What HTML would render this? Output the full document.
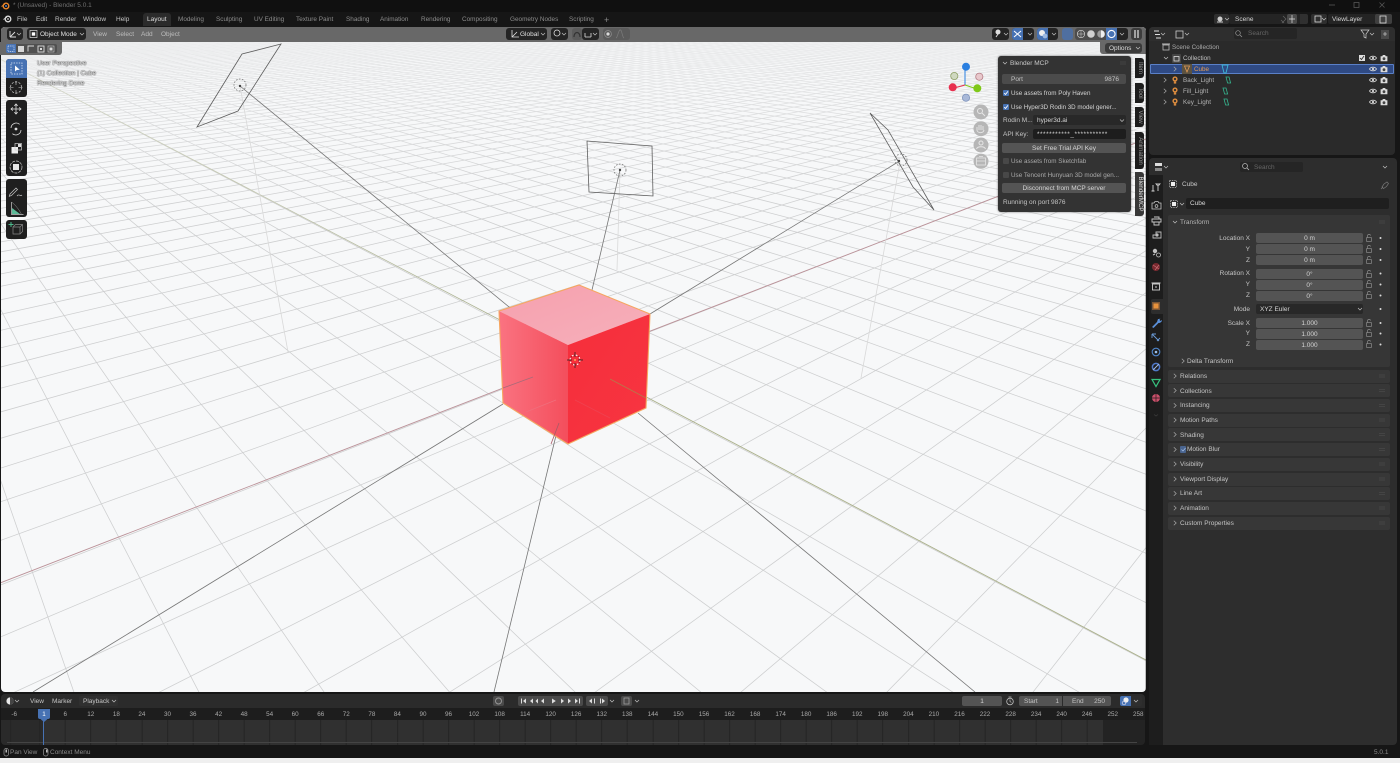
<!DOCTYPE html>
<html><head><meta charset="utf-8"><title>Blender</title>
<style>
html,body{margin:0;padding:0;width:1400px;height:763px;overflow:hidden;background:#efefef}
#app{position:absolute;left:0;top:0;width:1400px;height:758px;background:#161616;overflow:hidden;font-family:"Liberation Sans",sans-serif;filter:blur(.25px)}
.b{position:absolute;box-sizing:border-box}
.t{position:absolute;white-space:nowrap;font:6.5px/8px "Liberation Sans",sans-serif;height:8px;color:#c4c4c4;margin-top:1px}
.r{text-align:right}.c{text-align:center}
.f{position:absolute;background:#545454;border-radius:2px;height:10px;color:#d5d5d5;font:6.5px/11px "Liberation Sans",sans-serif;text-align:center}
.d{position:absolute;background:#282828;border-radius:2px;height:10px;color:#d5d5d5;font:6.5px/11px "Liberation Sans",sans-serif;box-sizing:border-box;padding-left:4px}
.p{position:absolute;left:1168px;width:222px;height:13px;background:#373737;border-radius:2px}
.h{position:absolute;background:#242424;border-radius:3px;height:12px;top:28px}
.tab{position:absolute;left:1135px;width:9px;background:#1d1d1d;border-radius:0 3px 3px 0}
.tab span{position:absolute;left:50%;top:50%;transform:translate(-50%,-50%) rotate(90deg);font:6.2px/8px "Liberation Sans",sans-serif;color:#9a9a9a;white-space:nowrap}
.n{position:absolute;top:711px;width:30px;margin-left:-15px;text-align:center;font:6.3px/8px "Liberation Sans",sans-serif;color:#a9a9a9}
.ov{position:absolute;font:6.5px/8px "Liberation Sans",sans-serif;color:#e6e6e6;text-shadow:0 0 1px #333,0 0 1px #333;white-space:nowrap;left:37px;margin-top:1px}
.w{color:#8b8b8b;font-size:6.4px}
svg{position:absolute;left:0;top:0}
</style></head><body><div id="app">

<!-- title & top bars -->
<div class="b" style="left:0;top:0;width:1400px;height:12px;background:#101010"></div>
<div class="t" style="left:13px;top:1px;color:#707070">* (Unsaved) - Blender 5.0.1</div>
<div class="t" style="left:17px;top:15px">File</div>
<div class="t" style="left:36px;top:15px">Edit</div>
<div class="t" style="left:55px;top:15px">Render</div>
<div class="t" style="left:83px;top:15px">Window</div>
<div class="t" style="left:116px;top:15px">Help</div>
<div class="b" style="left:143px;top:13px;width:28px;height:13px;background:#2b2b2b;border-radius:3px 3px 0 0"></div>
<div class="t" style="left:147px;top:15px;color:#ddd">Layout</div>
<div class="t w" style="left:178px;top:15px">Modeling</div>
<div class="t w" style="left:216px;top:15px">Sculpting</div>
<div class="t w" style="left:254px;top:15px">UV Editing</div>
<div class="t w" style="left:296px;top:15px">Texture Paint</div>
<div class="t w" style="left:346px;top:15px">Shading</div>
<div class="t w" style="left:380px;top:15px">Animation</div>
<div class="t w" style="left:421px;top:15px">Rendering</div>
<div class="t w" style="left:462px;top:15px">Compositing</div>
<div class="t w" style="left:510px;top:15px">Geometry Nodes</div>
<div class="t w" style="left:569px;top:15px">Scripting</div>
<div class="t" style="left:604px;top:15px;color:#8b8b8b;font-size:9px">+</div>

<div class="d" style="left:1229px;top:14px;width:72px;background:#242424;padding-left:6px">Scene</div>
<div class="b" style="left:1287px;top:14px;width:10px;height:10px;background:#4a4a4a;border-radius:2px"></div>
<div class="b" style="left:1300px;top:14px;width:8px;height:10px;background:#303030;border-radius:0 2px 2px 0"></div>
<div class="d" style="left:1328px;top:14px;width:64px;background:#242424;padding-left:4px">ViewLayer</div>
<div class="b" style="left:1375px;top:14px;width:17px;height:10px;background:#3f3f3f;border-radius:2px"></div>
<div class="b" style="left:1214px;top:14px;width:15px;height:10px;background:#2e2e2e;border-radius:2px"></div>
<div class="b" style="left:1311px;top:14px;width:16px;height:10px;background:#2e2e2e;border-radius:2px"></div>

<!-- viewport -->
<svg id="vp" width="1400" height="758" viewBox="0 0 1400 758" style="left:0;top:0">
<defs>
<clipPath id="vc"><rect x="1" y="27" width="1145" height="665" rx="4"/></clipPath>
<linearGradient id="fade" x1="0" y1="0" x2="0" y2="1"><stop offset="0" stop-color="#f7f8f9" stop-opacity=".72"/><stop offset=".5" stop-color="#f7f8f9" stop-opacity=".3"/><stop offset="1" stop-color="#f7f8f9" stop-opacity="0"/></linearGradient>
<linearGradient id="gl" x1="0" y1="0" x2="1" y2="0"><stop offset="0" stop-color="#fa7381"/><stop offset="1" stop-color="#f44e5c"/></linearGradient>
<linearGradient id="gr" x1="0" y1="0" x2="1" y2="1"><stop offset="0" stop-color="#f62e3b"/><stop offset="1" stop-color="#f73541"/></linearGradient>
<linearGradient id="gt" x1="0" y1="0" x2="1" y2="1"><stop offset="0" stop-color="#f7a0ae"/><stop offset="1" stop-color="#f5b0bb"/></linearGradient>
<linearGradient id="gax" gradientUnits="userSpaceOnUse" x1="0" y1="59" x2="500" y2="320"><stop offset="0" stop-color="#d8dacd"/><stop offset="1" stop-color="#aab08e"/></linearGradient>
</defs>
<g clip-path="url(#vc)">
<rect x="0" y="27" width="1146" height="666" fill="#f7f8f9"/>
<g id="grid" stroke="#cdcecf" stroke-width=".75" fill="none"></g>
<rect x="0" y="42" width="1146" height="170" fill="url(#fade)"/>
<!-- axes -->
<line x1="0" y1="583" x2="1146" y2="139" stroke="#bb9299" stroke-width=".9"/>
<line x1="0" y1="59" x2="500" y2="320" stroke="url(#gax)" stroke-width=".8"/>
<line x1="500" y1="320" x2="1146" y2="660" stroke="#a9af88" stroke-width=".9"/>
<!-- faint light verticals -->
<g stroke="#d9d9d9" stroke-width=".8"><line x1="240" y1="86" x2="288" y2="352"/><line x1="620" y1="170" x2="617" y2="270"/><line x1="900" y1="162" x2="861" y2="378"/></g>
<!-- light lines -->
<g stroke="#767676" stroke-width=".8" fill="none">
<line x1="240" y1="86" x2="514" y2="311"/><line x1="620" y1="170" x2="592" y2="290"/><line x1="898" y1="162" x2="650" y2="314"/>
<line x1="503" y1="404" x2="33" y2="692"/><line x1="559" y1="423" x2="494" y2="692"/><line x1="638" y1="413" x2="975" y2="692"/>
<polygon points="281,44 242,54 197,127 238,111" stroke="#5d5d5d"/>
<polygon points="587,141 652,146 653,196 589,192" stroke="#5d5d5d"/>
<polygon points="870,113 888,130 934,210 913,187" stroke="#5d5d5d"/>
<g stroke-dasharray="1.6 1.4" stroke="#777"><circle cx="240" cy="85" r="6"/><circle cx="620" cy="170" r="6"/><circle cx="901" cy="160" r="6"/></g>
</g>
<g fill="#444"><circle cx="240" cy="86" r="1.2"/><circle cx="620" cy="170" r="1.2"/><circle cx="899" cy="161" r="1.2"/></g>
<!-- cube -->
<polygon points="579,285 650,314 568,345 499,311" fill="url(#gt)"/>
<polygon points="499,311 568,345 568,444 503,403" fill="url(#gl)"/>
<polygon points="568,345 650,314 646,408 568,444" fill="url(#gr)"/>
<polygon points="579,285 650,314 646,408 568,444 503,403 499,311" fill="none" stroke="#f6a660" stroke-width="1.1"/>
<g fill="none" stroke-width=".8">
<line x1="503" y1="388" x2="533" y2="377" stroke="#a96a78"/>
<line x1="610" y1="379" x2="646" y2="398" stroke="#b57a4a"/>
<line x1="559" y1="423" x2="551" y2="444" stroke="#a85a66"/>
<line x1="526" y1="412" x2="556" y2="400" stroke="#ef6f7c"/>
<line x1="575" y1="400" x2="610" y2="418" stroke="#ef4250"/>
</g>
<circle cx="575" cy="360" r="5" fill="none" stroke="#fff" stroke-width="1" stroke-dasharray="2 2"/>
<circle cx="575" cy="360" r="5" fill="none" stroke="#b01020" stroke-width="1" stroke-dasharray="2 2" stroke-dashoffset="2"/>
<path d="M575 352v5M575 363v5M567 360h5M578 360h5" stroke="#222" stroke-width=".7"/>
<circle cx="575" cy="360" r=".9" fill="#f5d060"/>
</g>
<!-- header -->
<path d="M1 42V31a4 4 0 0 1 4-4H1142a4 4 0 0 1 4 4V42z" fill="#686868"/>
<path d="M0 42H62V52a3 3 0 0 1-3 3H0z" fill="#686868"/>
<path d="M1100 42H1146V54H1103a3 3 0 0 1-3-3z" fill="#686868"/>
<path d="M1146 690V30" stroke="#111" stroke-width=".5"/>
</svg>

<div class="h" style="left:7px;width:16px"></div>
<div class="h" style="left:27px;width:59px"></div>
<div class="t" style="left:40px;top:29.5px;color:#e0e0e0">Object Mode</div>
<div class="t" style="left:93px;top:29.5px;color:#bdbdbd">View</div>
<div class="t" style="left:116px;top:29.5px;color:#bdbdbd">Select</div>
<div class="t" style="left:141px;top:29.5px;color:#bdbdbd">Add</div>
<div class="t" style="left:161px;top:29.5px;color:#bdbdbd">Object</div>
<div class="h" style="left:506px;width:41px"></div>
<div class="t" style="left:520px;top:29.5px;color:#e0e0e0">Global</div>
<div class="h" style="left:551px;width:17px"></div>
<div class="h" style="left:572px;width:10px;background:#5b5b5b"></div>
<div class="h" style="left:582px;width:17px"></div>
<div class="h" style="left:603px;width:27px;background:#5b5b5b"></div>
<div class="h" style="left:992px;width:17px"></div>
<div class="h" style="left:1012px;width:22px"></div>
<div class="b" style="left:1012px;top:28px;width:11px;height:12px;background:#4772b3;border-radius:3px 0 0 3px"></div>
<div class="h" style="left:1037px;width:21px"></div>
<div class="b" style="left:1037px;top:28px;width:11px;height:12px;background:#4772b3;border-radius:3px 0 0 3px"></div>
<div class="b" style="left:1062px;top:28px;width:11px;height:12px;background:#4772b3;border-radius:3px;opacity:.75"></div>
<div class="h" style="left:1075px;width:53px;background:#4c4c4c"></div>
<div class="b" style="left:1106px;top:28px;width:11px;height:12px;background:#4772b3"></div>
<div class="b" style="left:1117px;top:28px;width:11px;height:12px;background:#242424;border-radius:0 3px 3px 0"></div>
<div class="h" style="left:1131px;width:11px;background:#3c3c3c"></div>
<div class="b" style="left:1105px;top:43px;width:37px;height:10px;background:#3a3a3a;border-radius:3px"></div>
<div class="t" style="left:1109px;top:43.5px;color:#ddd">Options</div>

<!-- selection mode buttons -->
<div class="b" style="left:6px;top:44px;width:10px;height:9px;background:#4772b3;border-radius:2px 0 0 2px"></div>
<div class="b" style="left:16px;top:44px;width:41px;height:9px;background:#505050;border-radius:0 2px 2px 0"></div>

<!-- toolbar -->
<div class="b" style="left:5.5px;top:59px;width:21.5px;height:38px;background:#1f1f1f;border-radius:3px"></div>
<div class="b" style="left:5.5px;top:59px;width:21.5px;height:19px;background:#4772b3;border-radius:3px 3px 0 0"></div>
<div class="b" style="left:5.5px;top:100px;width:21.5px;height:76px;background:#1f1f1f;border-radius:3px"></div>
<div class="b" style="left:5.5px;top:179px;width:21.5px;height:38px;background:#1f1f1f;border-radius:3px"></div>
<div class="b" style="left:5.5px;top:220px;width:21.5px;height:19px;background:#1f1f1f;border-radius:3px"></div>

<div class="ov" style="top:59px">User Perspective</div>
<div class="ov" style="top:69px">(1) Collection | Cube</div>
<div class="ov" style="top:79px">Rendering Done</div>

<!-- MCP panel -->
<div class="b" style="left:997.5px;top:56px;width:133px;height:156px;background:#333;border-radius:3px;box-shadow:0 0 2px rgba(0,0,0,.5)"></div>
<div class="t" style="left:1010px;top:58.5px;color:#c8c8c8">Blender MCP</div>
<div class="f" style="left:1002px;top:74px;width:124px;background:#4b4b4b"></div>
<div class="t" style="left:1011px;top:74.5px">Port</div>
<div class="t r" style="left:1090px;top:74.5px;width:29px">9876</div>
<div class="t" style="left:1011px;top:88.5px;color:#d5d5d5;font-size:6.3px">Use assets from Poly Haven</div>
<div class="t" style="left:1011px;top:102.5px;color:#d5d5d5;font-size:6.2px">Use Hyper3D Rodin 3D model gener...</div>
<div class="t" style="left:1003px;top:115.5px">Rodin M...</div>
<div class="d" style="left:1033px;top:115px;width:93px">hyper3d.ai</div>
<div class="t" style="left:1003px;top:129.5px">API Key:</div>
<div class="d" style="left:1033px;top:129px;width:93px;background:#1d1d1d;letter-spacing:.5px">***********_***********</div>
<div class="f" style="left:1002px;top:142.5px;width:124px">Set Free Trial API Key</div>
<div class="t" style="left:1011px;top:156.5px;color:#a9a9a9;font-size:6.3px">Use assets from Sketchfab</div>
<div class="t" style="left:1011px;top:170.5px;color:#a9a9a9;font-size:6.3px">Use Tencent Hunyuan 3D model gen...</div>
<div class="f" style="left:1002px;top:183px;width:124px">Disconnect from MCP server</div>
<div class="t" style="left:1003px;top:197.5px">Running on port 9876</div>
<div class="b" style="left:1003px;top:90px;width:6px;height:6px;background:#4772b3;border-radius:1px"></div>
<div class="b" style="left:1003px;top:104px;width:6px;height:6px;background:#4772b3;border-radius:1px"></div>
<div class="b" style="left:1003px;top:158px;width:6px;height:6px;background:#484848;border-radius:1px"></div>
<div class="b" style="left:1003px;top:172px;width:6px;height:6px;background:#484848;border-radius:1px"></div>

<div class="tab" style="top:58px;height:20px"><span>Item</span></div>
<div class="tab" style="top:83px;height:20px"><span>Tool</span></div>
<div class="tab" style="top:107px;height:20px"><span>View</span></div>
<div class="tab" style="top:132px;height:37px"><span>Animation</span></div>
<div class="tab" style="top:172px;height:44px;background:#383838"><span style="color:#e4e4e4">BlenderMCP</span></div>

<!-- outliner -->
<div class="b" style="left:1149px;top:27px;width:246px;height:128px;background:#2a2a2a;border-radius:4px"></div>
<div class="b" style="left:1149px;top:27px;width:246px;height:14px;background:#2e2e2e;border-radius:4px 4px 0 0"></div>
<div class="d" style="left:1234px;top:28px;width:63px;background:#252525;padding-left:14px;color:#666;height:11px;line-height:12px">Search</div>
<div class="b" style="left:1150px;top:63.5px;width:244px;height:10.5px;background:#2f4a84;border:.7px solid #5a80c8;border-radius:1px"></div>
<div class="t" style="left:1172px;top:43px;color:#a9a9a9;font-size:6.3px">Scene Collection</div>
<div class="t" style="left:1183px;top:54px;color:#c2c2c2;font-size:6.3px">Collection</div>
<div class="t" style="left:1194px;top:65px;color:#e29a55;font-size:6.3px">Cube</div>
<div class="t" style="left:1183px;top:76px;color:#b4b4b4;font-size:6.3px">Back_Light</div>
<div class="t" style="left:1183px;top:87px;color:#b4b4b4;font-size:6.3px">Fill_Light</div>
<div class="t" style="left:1183px;top:98px;color:#b4b4b4;font-size:6.3px">Key_Light</div>

<!-- properties -->
<div class="b" style="left:1149px;top:158px;width:248px;height:587px;background:#2d2d2d;border-radius:4px"></div>
<div class="b" style="left:1149px;top:175px;width:14px;height:570px;background:#1d1d1d"></div>
<div class="b" style="left:1151px;top:299px;width:12px;height:15px;background:#2d2d2d;border-radius:2px 0 0 2px"></div>
<div class="d" style="left:1240px;top:162px;width:63px;background:#252525;padding-left:14px;color:#666">Search</div>
<div class="t" style="left:1182px;top:180px;color:#c8c8c8">Cube</div>
<div class="d" style="left:1186px;top:198px;width:203px;background:#1f1f1f;height:11px;line-height:12px">Cube</div>
<div class="b" style="left:1168px;top:215px;width:222px;height:152px;background:#363636;border-radius:2px"></div>
<div class="t" style="left:1180px;top:218px;color:#b5b5b5">Transform</div>

<div class="t r" style="left:1190px;top:234px;width:60px">Location X</div>
<div class="t r" style="left:1190px;top:245px;width:60px">Y</div>
<div class="t r" style="left:1190px;top:255.5px;width:60px">Z</div>
<div class="t r" style="left:1190px;top:269px;width:60px">Rotation X</div>
<div class="t r" style="left:1190px;top:280px;width:60px">Y</div>
<div class="t r" style="left:1190px;top:291px;width:60px">Z</div>
<div class="t r" style="left:1190px;top:305px;width:60px">Mode</div>
<div class="t r" style="left:1190px;top:318.5px;width:60px">Scale X</div>
<div class="t r" style="left:1190px;top:329px;width:60px">Y</div>
<div class="t r" style="left:1190px;top:340px;width:60px">Z</div>
<div class="f" style="left:1256px;top:233px;width:107px">0 m</div>
<div class="f" style="left:1256px;top:244px;width:107px">0 m</div>
<div class="f" style="left:1256px;top:255px;width:107px">0 m</div>
<div class="f" style="left:1256px;top:268.5px;width:107px">0°</div>
<div class="f" style="left:1256px;top:279.5px;width:107px">0°</div>
<div class="f" style="left:1256px;top:290.5px;width:107px">0°</div>
<div class="d" style="left:1256px;top:304px;width:107px">XYZ Euler</div>
<div class="f" style="left:1256px;top:318px;width:107px">1.000</div>
<div class="f" style="left:1256px;top:328.5px;width:107px">1.000</div>
<div class="f" style="left:1256px;top:339.5px;width:107px">1.000</div>
<div class="t" style="left:1187px;top:357px">Delta Transform</div>

<div class="p" style="top:369.5px"></div><div class="t" style="left:1180px;top:372px">Relations</div>
<div class="p" style="top:384px"></div><div class="t" style="left:1180px;top:386.5px">Collections</div>
<div class="p" style="top:399px"></div><div class="t" style="left:1180px;top:401px">Instancing</div>
<div class="p" style="top:413.5px"></div><div class="t" style="left:1180px;top:416px">Motion Paths</div>
<div class="p" style="top:428px"></div><div class="t" style="left:1180px;top:430.5px">Shading</div>
<div class="p" style="top:443px"></div><div class="t" style="left:1187px;top:445px">Motion Blur</div>
<div class="p" style="top:458px"></div><div class="t" style="left:1180px;top:460px">Visibility</div>
<div class="p" style="top:472.5px"></div><div class="t" style="left:1180px;top:474.5px">Viewport Display</div>
<div class="p" style="top:487px"></div><div class="t" style="left:1180px;top:489px">Line Art</div>
<div class="p" style="top:502px"></div><div class="t" style="left:1180px;top:504px">Animation</div>
<div class="p" style="top:516.5px"></div><div class="t" style="left:1180px;top:518.5px">Custom Properties</div>
<div class="b" style="left:1180px;top:446px;width:6px;height:7px;background:#4a6590;border-radius:1px"></div>

<!-- timeline -->
<div class="b" style="left:1px;top:694px;width:1144px;height:51px;background:#1d1d1d;border-radius:4px;overflow:hidden">
<div class="b" style="left:0;top:0;width:1144px;height:14px;background:#2b2b2b"></div>
<div class="b" style="left:42px;top:26px;width:1060px;height:25px;background:#303030"></div>
<div class="b" style="left:0;top:26px;width:42px;height:25px;background:#2a2a2a"></div>
<div class="b" style="left:1102px;top:26px;width:42px;height:25px;background:#232323"></div>
<div class="b" style="left:0;top:26px;width:1102px;height:25px;background:repeating-linear-gradient(90deg,transparent 0,transparent 24.55px,#242424 24.55px,#242424 25.55px);background-position:13.7px 0"></div>
<div class="b" style="left:6px;top:48px;width:1130px;height:1px;background:#444"></div>
</div>
<div class="t" style="left:30px;top:696.5px">View</div>
<div class="t" style="left:52px;top:696.5px">Marker</div>
<div class="b" style="left:79px;top:696px;width:39px;height:10px;background:#303030;border-radius:2px"></div>
<div class="t" style="left:83px;top:696.5px">Playback</div>
<div class="b" style="left:493px;top:696px;width:11px;height:10px;background:#4a4a4a;border-radius:2px"></div>
<div class="b" style="left:518px;top:696px;width:65px;height:10px;background:#4a4a4a;border-radius:2px"></div>
<div class="b" style="left:586px;top:696px;width:22px;height:10px;background:#4a4a4a;border-radius:2px"></div>
<div class="b" style="left:621px;top:696px;width:11px;height:10px;background:#4a4a4a;border-radius:2px"></div>
<div class="f" style="left:962px;top:696px;width:40px">1</div>
<div class="f" style="left:1019px;top:696px;width:43px;border-radius:2px 0 0 2px"></div>
<div class="f" style="left:1063px;top:696px;width:48px;border-radius:0 2px 2px 0"></div>
<div class="t" style="left:1024px;top:696.5px">Start</div>
<div class="t r" style="left:1045px;top:696.5px;width:14px">1</div>
<div class="t" style="left:1072px;top:696.5px">End</div>
<div class="t r" style="left:1090px;top:696.5px;width:15px">250</div>
<div class="b" style="left:1120px;top:696px;width:11px;height:10px;background:#4772b3;border-radius:2px 0 0 2px"></div>
<div class="b" style="left:1131px;top:696px;width:11px;height:10px;background:#2e2e2e;border-radius:0 2px 2px 0"></div>

<div class="n" style="left:14.2px">-6</div><div class="n" style="left:65.3px">6</div><div class="n" style="left:90.8px">12</div><div class="n" style="left:116.4px">18</div><div class="n" style="left:141.9px">24</div><div class="n" style="left:167.5px">30</div><div class="n" style="left:193px">36</div><div class="n" style="left:218.6px">42</div><div class="n" style="left:244.1px">48</div><div class="n" style="left:269.7px">54</div><div class="n" style="left:295.2px">60</div><div class="n" style="left:320.8px">66</div><div class="n" style="left:346.3px">72</div><div class="n" style="left:371.9px">78</div><div class="n" style="left:397.4px">84</div><div class="n" style="left:423px">90</div><div class="n" style="left:448.5px">96</div><div class="n" style="left:474px">102</div><div class="n" style="left:499.6px">108</div><div class="n" style="left:525.1px">114</div><div class="n" style="left:550.7px">120</div><div class="n" style="left:576.2px">126</div><div class="n" style="left:601.8px">132</div><div class="n" style="left:627.3px">138</div><div class="n" style="left:652.9px">144</div><div class="n" style="left:678.4px">150</div><div class="n" style="left:704px">156</div><div class="n" style="left:729.5px">162</div><div class="n" style="left:755.1px">168</div><div class="n" style="left:780.6px">174</div><div class="n" style="left:806.2px">180</div><div class="n" style="left:831.7px">186</div><div class="n" style="left:857.3px">192</div><div class="n" style="left:882.8px">198</div><div class="n" style="left:908.4px">204</div><div class="n" style="left:933.9px">210</div><div class="n" style="left:959.5px">216</div><div class="n" style="left:985px">222</div><div class="n" style="left:1010.6px">228</div><div class="n" style="left:1036.1px">234</div><div class="n" style="left:1061.7px">240</div><div class="n" style="left:1087.2px">246</div><div class="n" style="left:1112.8px">252</div><div class="n" style="left:1138.3px">258</div>
<div class="b" style="left:43px;top:718px;width:1px;height:27px;background:#4772b3"></div>
<div class="b" style="left:38px;top:709px;width:12px;height:10px;background:#4772b3;border-radius:2px"></div>

<div class="t" style="left:10px;top:748px;color:#8a8a8a">Pan View</div>
<div class="t" style="left:50px;top:748px;color:#8a8a8a">Context Menu</div>
<div class="t" style="left:1374px;top:748px;color:#8a8a8a">5.0.1</div>

<!-- icon overlay -->
<svg width="1400" height="758" viewBox="0 0 1400 758" fill="none">
<defs>
<g id="eye"><path d="M-3.5 0C-2-2.4 2-2.4 3.5 0C2 2.4-2 2.4-3.5 0z" stroke="#d8d8d8" stroke-width=".8"/><circle r="1.1" fill="#d8d8d8"/></g>
<g id="cam"><path d="M-3.4-1.8h1.6l.7-1.2h2.2l.7 1.2h1.6v5h-6.8z" fill="#dcdcdc"/><circle cy=".7" r="1.4" fill="#444"/></g>
<g id="lock"><rect x="-2.4" y="-.4" width="4.8" height="3.8" stroke="#8c8c8c" stroke-width=".7"/><path d="M-1.5-.4v-2a1.6 1.6 0 0 1 3.1 0" stroke="#8c8c8c" stroke-width=".7"/></g>
<g id="grip"><path d="M-3-1h6M-3 1h6" stroke="#4a4a4a" stroke-width=".7"/></g>
<g id="bulb"><circle cy="-1" r="2.6" fill="#d98a3e"/><circle cy="-1" r="1.1" fill="#2a2a2a"/><rect x="-1.2" y="1.6" width="2.4" height="2" fill="#d98a3e"/></g>
<g id="ldat"><path d="M-2-3h3l1.6 6h-3z" stroke="#36b58f" stroke-width=".8"/></g>
<g id="chev"><path d="M-1.2-2.2L1.2 0L-1.2 2.2" stroke="#a8a8a8" stroke-width=".7"/></g>
<g id="down"><path d="M-2-1L0 1L2-1" stroke="#c0c0c0" stroke-width=".7"/></g>
<g id="obj"><rect x="-3.5" y="-3.5" width="7" height="7" stroke="#bbb" stroke-width=".7" stroke-dasharray="1.4 1"/><rect x="-2" y="-2" width="4" height="4" fill="#eee"/></g>
<g id="check"><path d="M-1.8 .2L-.5 1.5L1.9-1.6" stroke="#fff" stroke-width=".9"/></g>
</defs>

<!-- blender logo top -->
<g transform="translate(6,6)"><circle r="2.8" stroke="#e8852c" stroke-width="1.4"/><circle r="1" fill="#4f7fc7"/><path d="M-4.5 .5L-1-2" stroke="#e8852c" stroke-width="1"/></g>
<g transform="translate(8,19)"><circle r="2.8" stroke="#ddd" stroke-width="1.3"/><circle r=".9" fill="#ddd"/><path d="M-4.5 .5L-1-2" stroke="#ddd" stroke-width=".9"/></g>
<path d="M1329 5h6" stroke="#555" stroke-width=".8"/><rect x="1354" y="2.5" width="5" height="5" stroke="#555" stroke-width=".8"/><path d="M1379.5 2.5l5 5M1384.5 2.5l-5 5" stroke="#555" stroke-width=".8"/>

<!-- top right -->
<g transform="translate(1220,19)"><circle r="2.5" fill="#ccc"/><path d="M-3 3h6" stroke="#ccc"/></g><use href="#down" x="1227" y="19"/>
<path d="M1292 15v8M1289 19h6" stroke="#ddd" stroke-width=".7"/>
<path d="M1283 16l3 3-4 4M1281 20l3 3" stroke="#666" stroke-width=".7"/>
<rect x="1315" y="16" width="6" height="6" stroke="#ddd" stroke-width=".8"/><use href="#down" x="1324" y="19"/>
<rect x="1380" y="16" width="6" height="7" stroke="#ddd" stroke-width=".8"/>

<!-- viewport header icons -->
<g transform="translate(13,34)"><path d="M-3 3V-3M-3 3H3M-3 3L2-2" stroke="#ddd" stroke-width=".9"/></g><use href="#down" x="19" y="34"/>
<rect x="30" y="30.5" width="7" height="7" stroke="#ddd" stroke-width=".7"/><rect x="31.8" y="32.3" width="3.4" height="3.4" fill="#fff"/><use href="#down" x="82" y="34"/>
<path d="M512 30v7h7M512 37l5-5" stroke="#dedede" stroke-width=".8"/><use href="#down" x="543" y="34"/>
<circle cx="557" cy="33" r="3" stroke="#ddd" stroke-width=".8"/><use href="#down" x="564" y="34"/>
<path d="M574 37c0-6 6-6 6 0" stroke="#333" stroke-width="1.2"/><path d="M585 37h6M585 33v4M591 33v4" stroke="#ddd" stroke-width=".8"/><use href="#down" x="595" y="34"/>
<circle cx="608" cy="34" r="1.6" fill="#ddd"/><circle cx="608" cy="34" r="3.4" stroke="#999" stroke-width=".6"/><path d="M616 38c2-1 2-7 4-8s2 7 4 8" stroke="#7b7b7b" stroke-width=".7"/>
<circle cx="998" cy="32" r="2.5" fill="#ddd"/><path d="M996 37l2-3" stroke="#ddd"/><use href="#down" x="1006" y="34"/>
<path d="M1014 37l7-6M1014 31l7 6" stroke="#fff" stroke-width="1"/><use href="#down" x="1030" y="34"/>
<circle cx="1042" cy="33" r="3" fill="#eee"/><circle cx="1045" cy="36" r="2.4" fill="#9cb8e0"/><use href="#down" x="1054" y="34"/>
<circle cx="1081" cy="34" r="3.7" stroke="#ccc" stroke-width=".7"/><path d="M1081 30v8M1077 34h8" stroke="#ccc" stroke-width=".5"/>
<circle cx="1091" cy="34" r="3.8" fill="#d0d0d0"/><circle cx="1101" cy="34" r="3.8" fill="#999"/><path d="M1101 30.2a3.8 3.8 0 0 1 0 7.6z" fill="#eee"/>
<circle cx="1111.5" cy="34" r="3.6" stroke="#fff" stroke-width="1.1"/><use href="#down" x="1122" y="34"/>
<path d="M1135 30v8M1138 30v8" stroke="#d8d8d8" stroke-width="1.3"/><use href="#down" x="1138" y="48"/>

<!-- select mode -->
<rect x="8" y="46" width="6" height="5.5" stroke="#dfe8f8" stroke-width=".7" stroke-dasharray="1 .8"/>
<rect x="18" y="46" width="6" height="6" fill="#d8d8d8"/><path d="M28 51.5v-5.5h6" stroke="#ddd" stroke-width=".9"/><rect x="38" y="46" width="6" height="6" stroke="#ddd" stroke-width=".9"/><rect x="40" y="48" width="2" height="2" fill="#ddd"/><rect x="48" y="46" width="6" height="6" stroke="#ccc" stroke-width=".6"/><rect x="49.5" y="47.5" width="3" height="3" fill="#ddd"/>

<!-- toolbar icons -->
<rect x="11" y="63" width="11" height="11" stroke="#e3ebf8" stroke-width=".8" stroke-dasharray="1.4 1.2"/><path d="M15 65.5v6l1.8-1.5 3-.2z" fill="#fff"/>
<circle cx="16" cy="87.5" r="5.6" stroke="#ccc" stroke-width=".7" stroke-dasharray="2.2 1.4"/><path d="M16 81v4M16 90v4M9.5 87.5h4M18.5 87.5h4" stroke="#ccc" stroke-width=".6"/>
<path d="M16 104v10M11 109h10M14.4 105.8L16 104l1.6 1.8M14.4 112.2L16 114l1.6-1.8M12.8 107.4L11 109l1.8 1.6M19.2 107.4L21 109l-1.8 1.6" stroke="#ddd" stroke-width=".8"/>
<path d="M11 128a5.2 5.2 0 0 1 8.6-3.7M21 130a5.2 5.2 0 0 1-8.6 3.7" stroke="#ddd" stroke-width=".8"/><circle cx="16" cy="129" r="1.4" fill="#ddd"/>
<rect x="11.5" y="147" width="6.5" height="6.5" fill="#eee"/><rect x="15" y="143.5" width="6.5" height="6.5" stroke="#ccc" stroke-width=".7"/><rect x="18" y="144" width="3" height="3" fill="#ddd"/>
<circle cx="16" cy="167" r="6" stroke="#ccc" stroke-width=".7" stroke-dasharray="3 1"/><rect x="13" y="164" width="6" height="6" fill="#e8e8e8"/>
<path d="M10 194l6-6 1.5 1.5-6 6-2.2.8zM17 196c2-3 3 1 5-1" stroke="#ccc" stroke-width=".7"/>
<path d="M12 208l8 6h-8z" fill="#5cbb98"/><path d="M11.5 202v12.5h12" stroke="#ccc" stroke-width=".7"/><path d="M11.5 202c4 3 8 8 10 12.5" stroke="#999" stroke-width=".5"/>
<path d="M13 227h7v7h-7zM13 227l2.5-2.5h7v7l-2.5 2.5M20 227l2.5-2.5" stroke="#888" stroke-width=".7"/><path d="M11 222v5M8.5 224.5h5" stroke="#4cb98c" stroke-width="1"/>

<!-- gizmo -->
<path d="M965 85V70" stroke="#2a7fe0" stroke-width="1"/><path d="M965 85L956 87.5" stroke="#e8304f" stroke-width="1"/><path d="M965 85L974 88" stroke="#7fc818" stroke-width="1"/>
<circle cx="954.3" cy="76" r="3.6" fill="#cfd8c0" stroke="#8ea066" stroke-width=".8"/>
<circle cx="979.3" cy="76.7" r="3.6" fill="#e8c8cc" stroke="#b47c84" stroke-width=".8"/>
<circle cx="966" cy="97.7" r="3.6" fill="#a8b8d8" stroke="#7d92ba" stroke-width=".8"/>
<circle cx="966" cy="66.7" r="4" fill="#2a7fe0"/><circle cx="952.7" cy="87.3" r="4" fill="#e8304f"/><circle cx="977.3" cy="88.3" r="4" fill="#7fc818"/>
<g fill="#b6b6b6"><circle cx="981" cy="112" r="7.5"/><circle cx="981" cy="128.7" r="7.5"/><circle cx="981" cy="145" r="7.5"/><circle cx="981" cy="161.3" r="7.5"/></g>
<circle cx="980" cy="111" r="2.5" stroke="#e6e6e6"/><path d="M982 113l3 3" stroke="#e6e6e6"/>
<path d="M977 130v-3M979 130v-5M981 130v-5M983 130v-4M977 130c0 3 6 4 7 0" stroke="#e6e6e6" stroke-width=".9"/>
<circle cx="981" cy="143" r="2" stroke="#e6e6e6"/><path d="M976.5 149c1-3 8-3 9 0" stroke="#e6e6e6"/>
<rect x="976.5" y="158" width="9" height="7" stroke="#e6e6e6" stroke-width=".8"/><path d="M976.5 161h9M979 156.5h4" stroke="#e6e6e6" stroke-width=".8"/>

<!-- MCP -->
<use href="#down" x="1005" y="63"/><use href="#grip" x="1123" y="63"/><use href="#check" x="1006" y="93"/><use href="#check" x="1006" y="107"/><use href="#down" x="1122" y="120.5"/>

<!-- outliner -->
<path d="M1154 31h5M1155 34.5h5M1156 38h5" stroke="#ddd" stroke-width=".9"/><use href="#down" x="1163" y="34"/>
<rect x="1176" y="31" width="7" height="7" stroke="#ccc" stroke-width=".8"/><use href="#down" x="1187" y="34"/>
<circle cx="1238" cy="33" r="2.3" stroke="#999" stroke-width=".7"/><path d="M1240 35l2 2" stroke="#999" stroke-width=".7"/>
<path d="M1361 30h8l-3 4v4l-2-1v-3z" stroke="#ccc" stroke-width=".7"/><use href="#down" x="1372" y="34"/><rect x="1381" y="30" width="8" height="9" fill="#4a4a4a"/><path d="M1383 34h4M1385 32v4" stroke="#ddd" stroke-width=".6"/>
<rect x="1163" y="45" width="6" height="5" stroke="#bbb" stroke-width=".8"/><path d="M1162 44h8" stroke="#bbb"/>
<rect x="1172" y="54" width="9" height="9" rx="1" fill="#454545"/><rect x="1174" y="56.5" width="5" height="4.5" stroke="#ddd" stroke-width=".8"/><use href="#down" x="1166" y="58"/>
<rect x="1359" y="55" width="6" height="6" fill="#ddd"/><path d="M1360 58l1.5 1.5L1364 56" stroke="#222" stroke-width=".8"/>
<rect x="1182" y="64" width="10" height="10" fill="#5c5240"/><path d="M1184.5 66h5l-2.5 6z" stroke="#e29a55" stroke-width=".8"/>
<path d="M1222 65h6l-2 8h-2z" stroke="#3cb8d8" stroke-width=".9"/>
<use href="#chev" x="1175" y="69"/><use href="#chev" x="1165" y="80"/><use href="#chev" x="1165" y="91"/><use href="#chev" x="1165" y="102"/>
<use href="#bulb" x="1175" y="80"/><use href="#bulb" x="1175" y="91"/><use href="#bulb" x="1175" y="102"/>
<use href="#ldat" x="1228" y="80"/><use href="#ldat" x="1225" y="91"/><use href="#ldat" x="1226" y="102"/>
<use href="#eye" x="1373" y="58"/><use href="#eye" x="1373" y="69"/><use href="#eye" x="1373" y="80"/><use href="#eye" x="1373" y="91"/><use href="#eye" x="1373" y="102"/>
<use href="#cam" x="1384" y="58"/><use href="#cam" x="1384" y="69"/><use href="#cam" x="1384" y="80"/><use href="#cam" x="1384" y="91"/><use href="#cam" x="1384" y="102"/>

<!-- properties header -->
<rect x="1155" y="163" width="7" height="3" fill="#ddd"/><rect x="1155" y="168" width="7" height="3" fill="#888"/><use href="#down" x="1166" y="167"/>
<circle cx="1245" cy="166" r="2.5" stroke="#bbb" stroke-width=".7"/><path d="M1247 168l2 2" stroke="#bbb" stroke-width=".8"/>
<use href="#down" x="1385" y="167"/>
<use href="#obj" x="1173" y="184"/><path d="M1382 187l2-3 3-2 1.5 1.5-2 3-3 2zM1381 189l2-2" stroke="#777" stroke-width=".7"/>
<use href="#obj" x="1174" y="204"/><use href="#down" x="1182" y="204"/>
<use href="#down" x="1175" y="222"/><use href="#grip" x="1382" y="222"/>
<use href="#chev" x="1183" y="361"/>
<use href="#lock" x="1369" y="238"/><use href="#lock" x="1369" y="249"/><use href="#lock" x="1369" y="260"/><use href="#lock" x="1369" y="274"/><use href="#lock" x="1369" y="284"/><use href="#lock" x="1369" y="295"/><use href="#lock" x="1369" y="323"/><use href="#lock" x="1369" y="333"/><use href="#lock" x="1369" y="344"/>
<g fill="#ddd"><circle cx="1380.5" cy="238" r="1"/><circle cx="1380.5" cy="249" r="1"/><circle cx="1380.5" cy="260" r="1"/><circle cx="1380.5" cy="273.5" r="1"/><circle cx="1380.5" cy="284.5" r="1"/><circle cx="1380.5" cy="295.5" r="1"/><circle cx="1380.5" cy="309" r="1"/><circle cx="1380.5" cy="323" r="1"/><circle cx="1380.5" cy="333.5" r="1"/><circle cx="1380.5" cy="344.5" r="1"/></g>
<use href="#down" x="1360" y="309"/>
<g><use href="#chev" x="1175" y="376"/><use href="#chev" x="1175" y="390.5"/><use href="#chev" x="1175" y="405.5"/><use href="#chev" x="1175" y="420"/><use href="#chev" x="1175" y="434.5"/><use href="#chev" x="1175" y="449.5"/><use href="#chev" x="1175" y="464"/><use href="#chev" x="1175" y="479"/><use href="#chev" x="1175" y="493.5"/><use href="#chev" x="1175" y="508"/><use href="#chev" x="1175" y="523"/>
<use href="#grip" x="1382" y="376"/><use href="#grip" x="1382" y="390.5"/><use href="#grip" x="1382" y="405.5"/><use href="#grip" x="1382" y="420"/><use href="#grip" x="1382" y="434.5"/><use href="#grip" x="1382" y="449.5"/><use href="#grip" x="1382" y="464"/><use href="#grip" x="1382" y="479"/><use href="#grip" x="1382" y="493.5"/><use href="#grip" x="1382" y="508"/><use href="#grip" x="1382" y="523"/></g>
<path d="M1181.5 449.5l1.5 1.5 2.5-3" stroke="#a9c2e8" stroke-width=".7"/>

<!-- property tabs -->
<path d="M1153 185v6M1151.5 191h3M1158 183v8M1156 183c0 3 4 3 4 0" stroke="#d6d6d6" stroke-width=".9"/>
<path d="M1152 203h2l1-1.5h3l1 1.5h2v6h-9z" stroke="#c8c8c8" stroke-width=".8"/><circle cx="1156.5" cy="206" r="1.4" stroke="#c8c8c8" stroke-width=".7"/>
<path d="M1152 219h9v3h-9zM1154 217h5v2M1154 222v3h5v-3" stroke="#c8c8c8" stroke-width=".9"/>
<path d="M1153 238v-3h3v-3h5v6z" stroke="#bdbdbd" stroke-width=".9"/><circle cx="1157" cy="235" r="1.6" fill="#bdbdbd"/>
<circle cx="1155" cy="251" r="2.2" fill="#c0c0c0"/><circle cx="1158.5" cy="255" r="2" stroke="#c0c0c0" stroke-width=".8"/><path d="M1153 255l2-1" stroke="#c0c0c0"/>
<circle cx="1156" cy="267" r="4" fill="#7a2a30"/><path d="M1153 265l6 4M1159 265l-4 5" stroke="#c87078" stroke-width=".7"/>
<rect x="1152.5" y="284" width="7" height="6" stroke="#d0d0d0" stroke-width=".9"/><path d="M1151.5 283h9M1155 287h2" stroke="#d0d0d0" stroke-width=".9"/>
<rect x="1152" y="302" width="8" height="8" fill="#7b5636"/><rect x="1153.5" y="303.5" width="5" height="5" fill="#e8923c"/>
<path d="M1152 327l5-5 1-3c1 0 2 0 2.5-1l-1 2 1 1 1.5-1c0 2-2 3-3.5 3l-5 5z" fill="#5a8fd8"/>
<path d="M1152 334h4M1152 334v4M1152 334l7 7M1157 341l3-3" stroke="#6a9bd8" stroke-width=".9"/>
<circle cx="1156" cy="352" r="3.8" stroke="#4f86cc" stroke-width="1.1"/><circle cx="1156" cy="352" r="1.3" fill="#9cc2ee"/>
<circle cx="1156" cy="367" r="3.6" stroke="#4f78c8" stroke-width="1.5"/><path d="M1153 370l6-6" stroke="#9fb8e6" stroke-width="1"/>
<path d="M1152 379.5h8l-4 7z" stroke="#37c27e" stroke-width="1.2"/>
<circle cx="1156" cy="398" r="4" fill="#c9506a"/><path d="M1152 398h8M1156 394v8" stroke="#2a1a1e" stroke-width=".7"/>
<path d="M1154 414.5l2 1.5 2-1.5" stroke="#3e3e3e" stroke-width=".7"/>

<!-- timeline icons -->
<circle cx="10" cy="701" r="3.6" fill="#e8e8e8"/><path d="M10 697.4v7.2a3.6 3.6 0 0 0 0-7.2z" fill="#444"/><use href="#down" x="17" y="701"/><use href="#down" x="114" y="701"/>
<circle cx="498.5" cy="701" r="3" stroke="#999" stroke-width=".9"/>
<g fill="#ddd"><rect x="521" y="698.5" width="1" height="5"/><path d="M526 698.5v5l-3-2.5zM530 701l3-2.5v5zM535.5 701l2.5-2.5v5zM544 698.5v5l-3-2.5zM552 698.5v5l3.8-2.5zM561 698.5v5l3-2.5zM568 698.5v5l3-2.5zM575 698.5v5l3-2.5z"/><rect x="579" y="698.5" width="1" height="5"/><path d="M592 698.5v5l-3-2.5zM602 698.5v5l3-2.5z"/></g>
<rect x="594" y="698.5" width="1" height="5" fill="#ddd"/><rect x="600" y="698.5" width="1" height="5" fill="#ddd"/>
<use href="#down" x="612" y="701"/><use href="#down" x="637" y="701"/>
<rect x="624" y="698" width="5" height="6" stroke="#9b9b9b" stroke-width=".8"/>
<circle cx="1010" cy="701.5" r="3.3" stroke="#bbb" stroke-width=".8"/><path d="M1010 699.5v2l1.4 1M1008.5 697h3" stroke="#bbb" stroke-width=".7"/>
<circle cx="1126" cy="700" r="2.6" fill="#eee"/><circle cx="1124" cy="703" r="1.8" stroke="#dde" stroke-width=".7"/><use href="#down" x="1136" y="701"/>
<!-- status icons -->
<rect x="4" y="748.5" width="4.5" height="7.5" rx="2" stroke="#999" stroke-width=".7"/><rect x="43.5" y="748.5" width="4.5" height="7.5" rx="2" stroke="#999" stroke-width=".7"/><path d="M5.5 749.5h1.5v3h-1.5z" fill="#bbb"/><path d="M46 749.5h1.5v3H46z" fill="#bbb"/>
<path d="M38 709h12v8l-6 5-6-5z" fill="#4772b3"/>
</svg>
<div class="n" style="left:44px;color:#fff;z-index:3">1</div>
</div>
<script>
(function(){
var g=document.getElementById('grid'),s='';
var X0=0,X1=1146,Y0=27,Y1=693;
function P(a,b){var w=1-.0383*a-.0448*b;return [575+(-39.5*a+33.7*b)/w,361+(15.4*a+17.7*b)/w];}
function L(p,q){
 var dx=q[0]-p[0],dy=q[1]-p[1],t0=0,t1=1;
 var c=[[-dx,p[0]-X0],[dx,X1-p[0]],[-dy,p[1]-Y0],[dy,Y1-p[1]]];
 for(var i=0;i<4;i++){
  var u=c[i][0],v=c[i][1];
  if(u===0){if(v<0)return;continue;}
  var r=v/u;
  if(u<0){if(r>t1)return;if(r>t0)t0=r;}
  else{if(r<t0)return;if(r<t1)t1=r;}
 }
 s+='<line x1="'+(p[0]+t0*dx).toFixed(1)+'" y1="'+(p[1]+t0*dy).toFixed(1)+'" x2="'+(p[0]+t1*dx).toFixed(1)+'" y2="'+(p[1]+t1*dy).toFixed(1)+'"/>';
}
for(var i=-220;i<=70;i++){
 var bmax=(1-.0383*i-.02)/.0448, amax=(1-.0448*i-.02)/.0383;
 L(P(i,-800),P(i,bmax));
 L(P(-800,i),P(amax,i));
}
g.innerHTML=s;
})();
</script>
</body></html>
